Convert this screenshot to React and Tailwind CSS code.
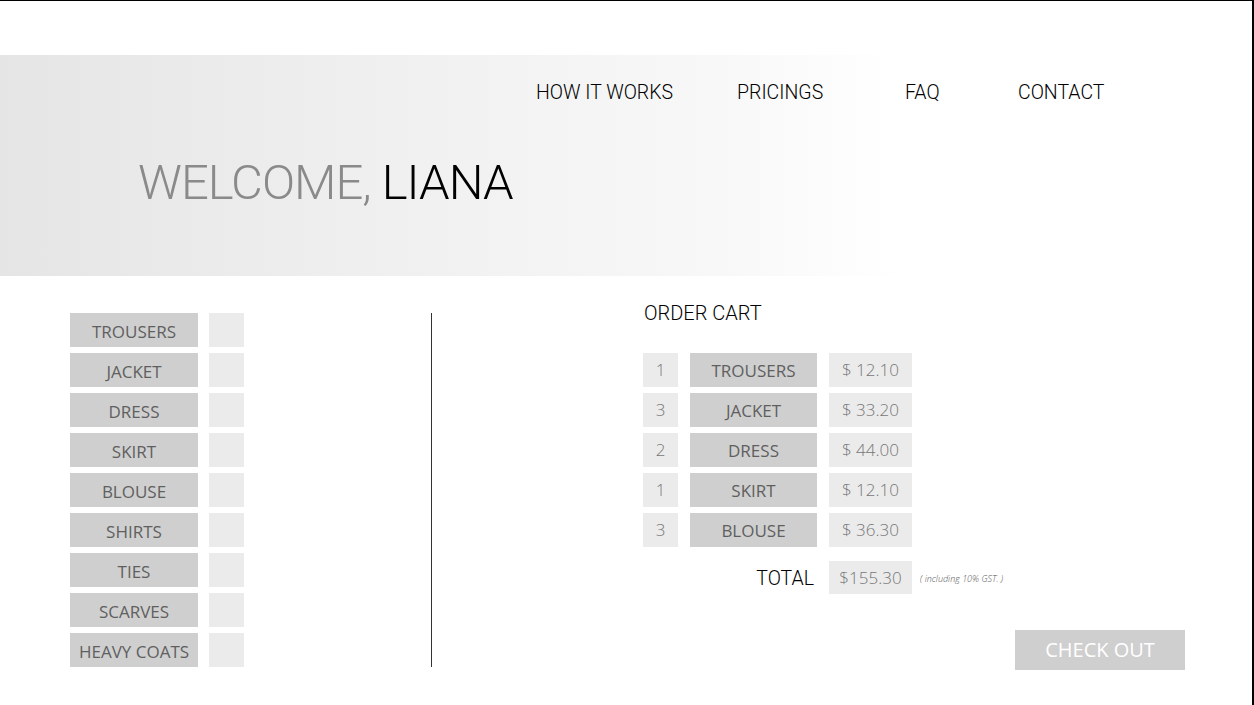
const NAV = [
  { label: "HOW IT WORKS", w: "w-[201px]" },
  { label: "PRICINGS", w: "w-[168px]" },
  { label: "FAQ", w: "w-[113px]" },
  { label: "CONTACT", w: "w-[140px]" },
];

const ITEMS = ["TROUSERS", "JACKET", "DRESS", "SKIRT", "BLOUSE", "SHIRTS", "TIES", "SCARVES", "HEAVY COATS"];

const CART = [
  { qty: 1, name: "TROUSERS", price: "$ 12.10" },
  { qty: 3, name: "JACKET", price: "$ 33.20" },
  { qty: 2, name: "DRESS", price: "$ 44.00" },
  { qty: 1, name: "SKIRT", price: "$ 12.10" },
  { qty: 3, name: "BLOUSE", price: "$ 36.30" },
];

const display = { fontFamily: "Roboto, 'Liberation Sans', sans-serif" };
const body = { fontFamily: "'Open Sans', 'Liberation Sans', sans-serif" };

export default function App() {
  return (
    <div className="w-full h-[705px] bg-white border-t border-r-2 border-black overflow-hidden">
      <div className="h-[54px]" />

      <header className="h-[221px] bg-[linear-gradient(90deg,#e5e5e5_0%,#f1f1f1_35%,#f8f8f8_58%,#ffffff_72%)]">
        <nav className="flex pl-[536px] pt-[26px]" style={display}>
          {NAV.map((n) => (
            <span key={n.label} className={`${n.w} text-[19.5px] leading-6 font-light text-black`}>
              {n.label}
            </span>
          ))}
        </nav>
        <h1 className="pl-[138px] mt-[50px] text-[49px] leading-[56px] font-light tracking-[-1px]" style={display}>
          <span className="text-[#8a8a8a]">WELCOME, </span>
          <span className="text-black">LIANA</span>
        </h1>
      </header>

      <main className="flex pt-[25px]">
        <div className="ml-[70px] mt-[12px] flex flex-col gap-[6px]">
          {ITEMS.map((item) => (
            <div key={item} className="flex gap-[11px]">
              <div
                className="w-[128px] h-[34px] bg-[#cfcfcf] flex items-center justify-center text-[17px] text-[#5f5f5f] pt-[3px]"
                style={body}
              >
                {item}
              </div>
              <div className="w-[35px] h-[34px] bg-[#ebebeb]" />
            </div>
          ))}
        </div>

        <div className="ml-[187px] mt-[12px] w-px h-[354px] bg-[#333333]" />

        <div className="ml-[211px] flex flex-col">
          <h2 className="pl-px text-[20px] leading-6 font-light text-black" style={display}>
            ORDER CART
          </h2>

          <div className="mt-[28px] flex flex-col gap-[6px]">
            {CART.map((row) => (
              <div key={row.name} className="flex gap-[12px]">
                <div
                  className="w-[35px] h-[34px] bg-[#ebebeb] flex items-center justify-center text-[17px] font-light text-[#777777]"
                  style={body}
                >
                  {row.qty}
                </div>
                <div
                  className="w-[127px] h-[34px] bg-[#cfcfcf] flex items-center justify-center text-[17px] text-[#5f5f5f] pt-[2px]"
                  style={body}
                >
                  {row.name}
                </div>
                <div
                  className="w-[83px] h-[34px] bg-[#ebebeb] flex items-center justify-center text-[17px] font-light text-[#777777]"
                  style={body}
                >
                  {row.price}
                </div>
              </div>
            ))}
          </div>

          <div className="mt-[14px] flex items-center gap-[12px]">
            <div className="w-[174px] text-right pr-[3px] text-[19.5px] leading-6 font-light text-black pt-[2px]" style={display}>
              TOTAL
            </div>
            <div
              className="w-[83px] h-[33px] bg-[#ebebeb] flex items-center justify-center text-[17px] font-light text-[#777777]"
              style={body}
            >
              $155.30
            </div>
            <span className="-ml-[4px] mt-[3px] text-[9px] font-light italic text-[#555555]" style={body}>
              ( including 10% GST. )
            </span>
          </div>

          <button
            className="mt-[36px] ml-[372px] w-[170px] h-[40px] bg-[#cfcfcf] text-white text-[20px] flex items-center justify-center"
            style={body}
          >
            CHECK OUT
          </button>
        </div>
      </main>
    </div>
  );
}
